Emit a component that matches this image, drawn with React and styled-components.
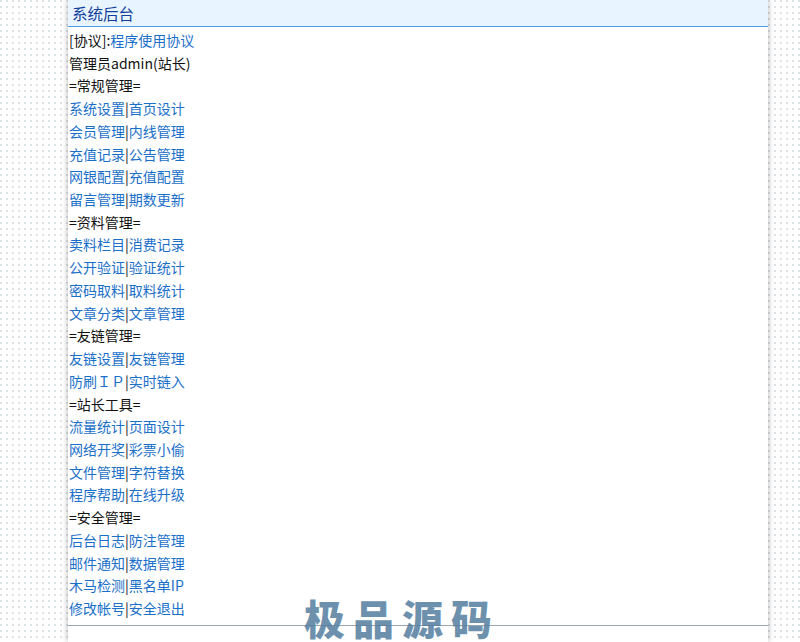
import React from "react";
import styled, { createGlobalStyle } from "styled-components";

const GlobalStyle = createGlobalStyle`
  html, body {
    margin: 0;
    padding: 0;
    height: 642px;
    overflow: hidden;
    background-color: #fff;
    background-image: radial-gradient(circle at 1px 1px, #dde2e4 0.8px, transparent 1.1px);
    background-size: 6px 6px;
    font-family: "Noto Sans CJK SC", "Noto Sans", sans-serif;
  }
`;

const Page = styled.div`
  position: relative;
  width: 800px;
  height: 642px;
  overflow: hidden;
`;

const Panel = styled.div`
  width: 700px;
  height: 642px;
  margin-left: 68px;
  background: #fff;
  box-shadow: 0 0 6px rgba(0, 0, 0, 0.3);
`;

const Header = styled.div`
  height: 26px;
  padding-left: 4px;
  background: #e8f4ff;
  border-bottom: 1px solid #4a9ee8;
  color: #0f3f9c;
  font-size: 15.5px;
  line-height: 27px;
`;

const Menu = styled.div`
  padding-top: 2px;
  padding-left: 1px;
  height: 599px;
  border-bottom: 1px solid #9aa7b0;
  box-sizing: border-box;
`;

const Row = styled.div`
  height: 22.72px;
  line-height: 22.72px;
  font-size: 14px;
  color: #111;
  white-space: nowrap;
`;

const Link = styled.a`
  color: #1a6fc9;
  text-decoration: none;
`;

const Watermark = styled.div`
  position: absolute;
  left: 304px;
  top: 592px;
  color: rgba(82, 125, 158, 0.85);
  font-size: 41px;
  line-height: 50px;
  font-weight: 900;
  letter-spacing: 8px;
  white-space: nowrap;
`;

const rows = [
  ["[协议]:", ["程序使用协议"]],
  ["管理员admin(站长)"],
  ["=常规管理="],
  [null, ["系统设置", "首页设计"]],
  [null, ["会员管理", "内线管理"]],
  [null, ["充值记录", "公告管理"]],
  [null, ["网银配置", "充值配置"]],
  [null, ["留言管理", "期数更新"]],
  ["=资料管理="],
  [null, ["卖料栏目", "消费记录"]],
  [null, ["公开验证", "验证统计"]],
  [null, ["密码取料", "取料统计"]],
  [null, ["文章分类", "文章管理"]],
  ["=友链管理="],
  [null, ["友链设置", "友链管理"]],
  [null, ["防刷ＩＰ", "实时链入"]],
  ["=站长工具="],
  [null, ["流量统计", "页面设计"]],
  [null, ["网络开奖", "彩票小偷"]],
  [null, ["文件管理", "字符替换"]],
  [null, ["程序帮助", "在线升级"]],
  ["=安全管理="],
  [null, ["后台日志", "防注管理"]],
  [null, ["邮件通知", "数据管理"]],
  [null, ["木马检测", "黑名单IP"]],
  [null, ["修改帐号", "安全退出"]],
];

export default function App() {
  return (
    <Page>
      <GlobalStyle />
      <Panel>
        <Header>系统后台</Header>
        <Menu>
          {rows.map(([text, links], i) => (
            <Row key={i}>
              {text}
              {links &&
                links.map((label, j) => (
                  <React.Fragment key={label}>
                    {j > 0 && "|"}
                    <Link href="#">{label}</Link>
                  </React.Fragment>
                ))}
            </Row>
          ))}
        </Menu>
      </Panel>
      <Watermark>极品源码</Watermark>
    </Page>
  );
}
